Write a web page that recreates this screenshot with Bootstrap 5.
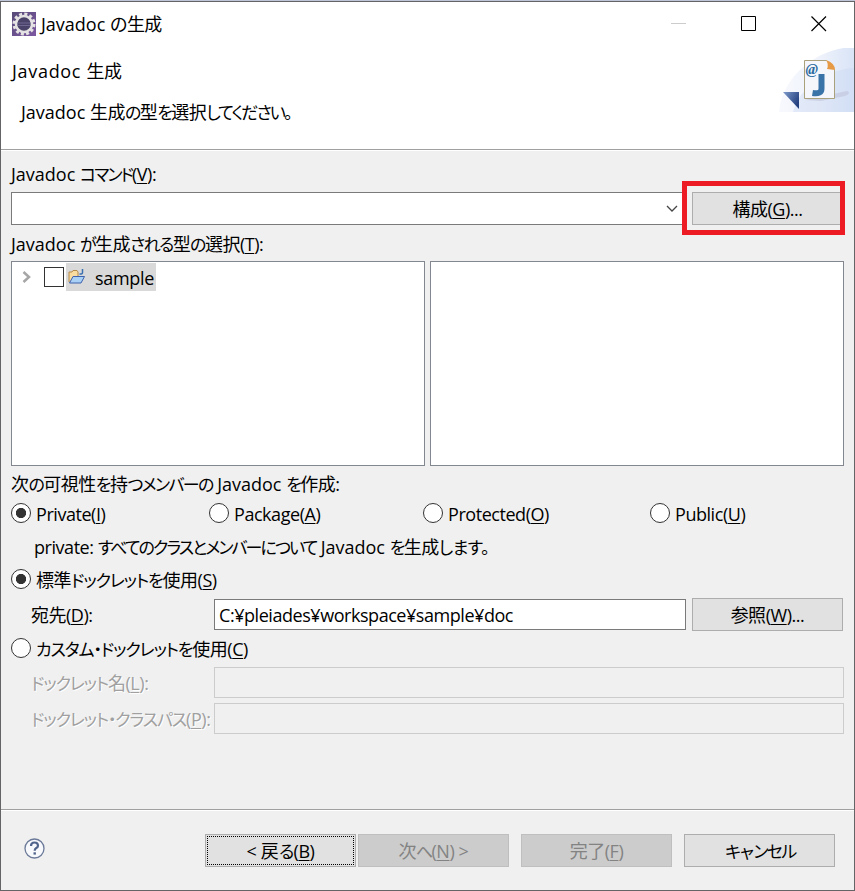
<!DOCTYPE html>
<html lang="ja">
<head>
<meta charset="utf-8">
<title>Javadoc の生成</title>
<link rel="stylesheet" href="https://cdn.jsdelivr.net/npm/bootstrap@5.3.0/dist/css/bootstrap.min.css">
<style>
body{width:855px;height:891px;overflow:hidden;background:#f0f0f0;color:#000;font:18px/24px "Open Sans","Noto Sans CJK JP",sans-serif;border-top:1px solid #bfc5d8;font-feature-settings:"palt";letter-spacing:-.45px}
.window-frame{height:890px;border:1px solid #646467;white-space:nowrap}
.jd{letter-spacing:0}
.jd-wide{letter-spacing:.7px}
.kj{letter-spacing:-.5px}
.ka,.kk,.kd,.kn,.kl,.kx{font-size:17px;line-height:1}
.ka{letter-spacing:-1.6px}
.kk{letter-spacing:-1.1px}
.kd{letter-spacing:-2px}
.kn{letter-spacing:-1.9px}
.kl{letter-spacing:-.5px}
.kx{letter-spacing:-3px}
u{text-decoration-thickness:1px;text-underline-offset:2px}
.dialog-head{height:148px;background:#fff;border-bottom:1px solid #a0a0a0}
.titlebar{height:44px;padding-left:11px}
.title-text{margin-left:5px}
.caption-btns{margin-right:27px;gap:54px}
.head-title{padding:13px 0 0 11px}
.head-desc{padding:17px 0 0 20px}
.head-art{right:0;top:46px}
.dialog-main{height:660px;border-top:1px solid #fff;border-bottom:1px solid #a0a0a0;padding:0 10px}
.r-cmd{height:41px;padding-top:5px}
.r-36{height:36px}
.r-types{padding-top:1px}
.combo{width:675px;height:33px;border:1px solid #7a7a7a;background:#fff;padding-right:6px}
.btn-win{--bs-btn-padding-y:0;--bs-btn-padding-x:0;--bs-btn-border-radius:0;--bs-btn-font-size:18px;--bs-btn-line-height:24px;--bs-btn-color:#000;--bs-btn-bg:#e1e1e1;--bs-btn-border-color:#adadad;--bs-btn-disabled-color:#838383;--bs-btn-disabled-bg:#ccc;--bs-btn-disabled-border-color:#bfbfbf;--bs-btn-disabled-opacity:1;width:151px;height:33px;padding-top:1px;letter-spacing:-.45px}
.btn-side{margin-right:1px}
.highlight-box{left:671px;top:-11px;width:163px;height:54px;border:5px solid #ed1c24;pointer-events:none}
.pane{border:1px solid #828790;background:#fff;width:414px;height:205px}
.tree-item{padding:1px 0 0 10px}
.tree-check{width:20px;height:20px;border:1px solid #333;background:#fff;margin:0 2px 0 12px}
.tree-label{height:28px;width:90px;background:#d9d9d9;padding-left:2px;gap:10px}
.tree-text{padding-top:2px;letter-spacing:-.3px}
.radio-row{height:24px}
.rad{width:20px;height:20px;border:1px solid #333;border-radius:50%;background:#fff;flex:none;margin-right:5px;margin-top:-2px}
.rad.on{background:radial-gradient(circle,#333 0 4.8px,#fff 5.4px)}
.o1{width:198px}.o2{width:214px}.o3{width:227px}
.r-note{height:42px;padding-left:23px}
.r-std{height:30px;padding-bottom:6px}
.lbl{width:203px;padding-left:20px}
.field{height:31px;border:1px solid #7a7a7a;background:#fff;padding:1px 0 0 4px}
.field-dest{margin-right:6px}
.field-off{border-color:#ccc;background:#f0f0f0}
.off{color:#a0a0a0;text-shadow:1px 1px #fff}
.r-path{margin-top:5px}
.dialog-foot{border-top:1px solid #fff;padding:23px 19px 0 23px}
.help-mark{margin-top:4px}
.focus-dots{outline:1px dotted #000;outline-offset:-3px}
.b-next{margin-left:2px}
.b-sep{margin-left:12px}
</style>
<script src="https://cdn.jsdelivr.net/npm/bootstrap@5.3.0/dist/js/bootstrap.bundle.min.js"></script>
</head>
<body>
<div class="window-frame d-flex flex-column">
  <header class="dialog-head position-relative">
    <div class="titlebar d-flex align-items-center">
      <svg width="24" height="24" viewBox="0 0 24 24"><defs><linearGradient id="pg" x1="0" y1="0" x2="1" y2="1"><stop offset="0" stop-color="#574b78"/><stop offset="1" stop-color="#7d58a2"/></linearGradient></defs><rect width="24" height="24" fill="url(#pg)"/><circle cx="12" cy="12" r="10" fill="none" stroke="#e4e2e2" stroke-width="3" stroke-dasharray="3 2.236"/><circle cx="12" cy="12" r="8" fill="#4a4268" stroke="#e4e2e2" stroke-width="2.600"/><path d="M5.500 11h13M5.500 13.500h13" stroke="#6f6792" stroke-width="1.200"/></svg>
      <span class="title-text"><span class="jd">Javadoc </span>の<span class="kj">生成</span></span>
      <div class="caption-btns d-flex ms-auto">
        <svg width="16" height="16"><path d="M0 7.500h15" stroke="#ccc"/></svg>
        <svg width="16" height="16"><path d="M.5 .5h14v14H.5z" fill="none" stroke="#000"/></svg>
        <svg width="16" height="16"><path d="M.5 .5l14.500 14.500M15 .5L.5 15" stroke="#000" stroke-width="1.200"/></svg>
      </div>
    </div>
    <div class="head-title"><span class="jd-wide">Javadoc </span><span class="kj">生成</span></div>
    <div class="head-desc"><span class="jd">Javadoc </span><span class="kj">生成</span><span class="ka">の</span><span class="kj">型</span><span class="ka">を</span><span class="kj">選択</span><span class="kn">してください。</span></div>
    <svg class="head-art position-absolute" width="75" height="64" viewBox="0 0 75 64"><defs><linearGradient id="sky"><stop offset="0" stop-color="#f8f9fe"/><stop offset=".55" stop-color="#eef2fb"/><stop offset="1" stop-color="#d9e4f7"/></linearGradient><linearGradient id="tri" x1="0" y1="0" x2="1" y2=".6"><stop offset="0" stop-color="#7f9ccb"/><stop offset="1" stop-color="#233f7e"/></linearGradient></defs>
      <path d="M0 64C3 29 37 0 75-1v65z" fill="url(#sky)"/><path d="M14 64C22 37 47 22 75 20v44z" fill="#c9d8f3" opacity=".4"/>
      <path d="M26 52l42-9q5 2-2 5l-24 5z" fill="#bfc3da" opacity=".6"/>
      <path d="M4 44h16v17z" fill="url(#tri)"/>
      <path d="M25.500 12.500h22l8 9v29h-30z" fill="#f5f6fb" stroke="#a9a17c"/><path d="M47 12q3 4 1 9l8 1q0-7-9-10z" fill="#e79a45"/>
      <text x="26.500" y="26" font-family="Liberation Serif,serif" font-weight="bold" font-style="italic" font-size="15" fill="#2a6aa0">@</text><path d="M42.500 26v14.500q0 6-9 4.500" fill="none" stroke="#3a73a8" stroke-width="6"/></svg>
  </header>
  <main class="dialog-main">
    <div class="r-cmd d-flex align-items-center"><span><span class="jd">Javadoc </span><span class="kd">コマンド</span>(<u>V</u>):</span></div>
    <div class="d-flex position-relative">
      <div class="combo d-flex align-items-center justify-content-end"><svg width="14" height="10"><path d="M2 2l5 5 5-5" fill="none" stroke="#444" stroke-width="1.300"/></svg></div>
      <button class="btn btn-win btn-side ms-auto"><span class="kj">構成</span>(<u>G</u>)...</button>
      <div class="highlight-box position-absolute"></div>
    </div>
    <div class="r-36 r-types d-flex align-items-center"><span><span class="jd">Javadoc </span><span class="ka">が</span><span class="kj">生成</span><span class="ka">される</span><span class="kj">型</span><span class="ka">の</span><span class="kj">選択</span>(<u>T</u>):</span></div>
    <div class="d-flex justify-content-between">
      <div class="pane"><div class="tree-item d-flex align-items-center">
        <svg width="10" height="12"><path d="M1.500 1L7 6l-5.500 5" fill="none" stroke="#a6a6a6" stroke-width="2.500"/></svg>
        <span class="tree-check"></span>
        <span class="tree-label d-flex align-items-center"><svg width="17" height="16" viewBox="0 0 17 16"><path d="M1 13V3h3l1-1.500h4l1 1.500v4" fill="#f9dda0" stroke="#b48a4a"/><path d="M1.500 14L5 7.500h11.500L13 14z" fill="#a9d0f5" stroke="#3f62ad"/><path d="M14.500 0v3.500q0 2-3 1.500" fill="none" stroke="#3a6fb0" stroke-width="1.500"/></svg><span class="tree-text">sample</span></span>
      </div></div>
      <div class="pane"></div>
    </div>
    <div class="r-36 d-flex align-items-center"><span><span class="kj">次</span><span class="ka">の</span><span class="kj">可視性</span><span class="ka">を</span><span class="kj">持</span><span class="ka">つメンバーの</span> <span class="jd">Javadoc </span><span class="ka">を</span><span class="kj">作成</span>:</span></div>
    <div class="radio-row d-flex">
      <div class="o1 d-flex align-items-center"><span class="rad on"></span><span>Private(<u>I</u>)</span></div>
      <div class="o2 d-flex align-items-center"><span class="rad"></span><span>Package(<u>A</u>)</span></div>
      <div class="o3 d-flex align-items-center"><span class="rad"></span><span>Protected(<u>O</u>)</span></div>
      <div class="d-flex align-items-center"><span class="rad"></span><span>Public(<u>U</u>)</span></div>
    </div>
    <div class="r-note d-flex align-items-center"><span>private: <span class="kn">すべてのクラスとメンバーについて</span> <span class="jd">Javadoc </span><span class="ka">を</span><span class="kj">生成</span><span class="kl">します。</span></span></div>
    <div class="r-std d-flex align-items-center"><span class="rad on"></span><span><span class="kj">標準</span><span class="kk">ドックレットを</span><span class="kj">使用</span>(<u>S</u>)</span></div>
    <div class="d-flex align-items-center"><div class="lbl"><span class="kj">宛先</span>(<u>D</u>):</div><div class="field field-dest d-flex align-items-center flex-grow-1"><span>C:¥pleiades¥workspace¥sample¥doc</span></div><button class="btn btn-win btn-side"><span class="kj">参照</span>(<u>W</u>)...</button></div>
    <div class="r-36 d-flex align-items-center"><span class="rad"></span><span><span class="kk">カスタム・ドックレットを</span><span class="kj">使用</span>(<u>C</u>)</span></div>
    <div class="d-flex align-items-center off"><div class="lbl"><span class="kk">ドックレット</span><span class="kj">名</span>(<u>L</u>):</div><div class="field field-off flex-grow-1"></div></div>
    <div class="r-path d-flex align-items-center off"><div class="lbl"><span class="kk">ドックレット・クラスパス</span>(<u>P</u>):</div><div class="field field-off flex-grow-1"></div></div>
  </main>
  <footer class="dialog-foot d-flex">
    <svg class="help-mark" width="21" height="21"><circle cx="10.500" cy="10.500" r="9.500" fill="#f8f9fc" stroke="#6b7a99" stroke-width="1.300"/><path d="M7 8q0-3.500 3.500-3.500T14 7.700q0 1.500-2 2.600-1.300.8-1.300 2.400" fill="none" stroke="#50648c" stroke-width="2.200"/><path d="M9.500 14.300h2.400v2.300H9.500z" fill="#50648c"/></svg>
    <button class="btn btn-win focus-dots ms-auto">&lt; <span class="kj">戻</span><span class="ka">る</span>(<u>B</u>)</button>
    <button class="btn btn-win b-next" disabled><span class="kj">次</span><span class="ka">へ</span>(<u>N</u>) &gt;</button>
    <button class="btn btn-win b-sep" disabled><span class="kj">完了</span>(<u>F</u>)</button>
    <button class="btn btn-win b-sep"><span class="kx">キャンセル</span></button>
  </footer>
</div>
</body>
</html>
